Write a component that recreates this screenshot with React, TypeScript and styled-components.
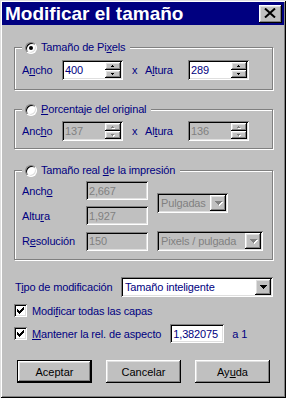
import React, { FC, ReactNode } from 'react';
import styled, { createGlobalStyle } from 'styled-components';

const GlobalStyle = createGlobalStyle`
	html, body {
		margin: 0;
		padding: 0;
	}
	body {
		background: #c0c0c0;
		font-family: "Liberation Sans", Arial, sans-serif;
		font-size: 11px;
		letter-spacing: -0.15px;
	}
	* {
		box-sizing: border-box;
	}
`

const NAVY = '#000080';

type Rect = [number, number, number, number];

const SPIN_UP: Rect[] = [[1, 0, 1, 1], [0, 1, 3, 1]];
const SPIN_DOWN: Rect[] = [[0, 0, 3, 1], [1, 1, 1, 1]];
const DROP: Rect[] = [[0, 0, 7, 1], [1, 1, 5, 1], [2, 2, 3, 1], [3, 3, 1, 1]];
// classic 7x7 check mark, one column at a time
const CHECK: Rect[] = [[0, 2, 1, 3], [1, 3, 1, 3], [2, 4, 1, 3], [3, 3, 1, 3], [4, 2, 1, 3], [5, 1, 1, 3], [6, 0, 1, 3]];

const Glyph: FC<{ rects: Rect[], w: number, h: number, off?: boolean }> = ({ rects, w, h, off }) => (
	<svg width={w + 1} height={h + 1} shapeRendering="crispEdges" style={{ display: 'block' }}>
		{off && rects.map(([x, y, rw, rh], i) => (
			<rect key={'s' + i} x={x + 1} y={y + 1} width={rw} height={rh} fill="#fff" />
		))}
		{rects.map(([x, y, rw, rh], i) => (
			<rect key={i} x={x} y={y} width={rw} height={rh} fill={off ? '#808080' : '#000'} />
		))}
	</svg>
)

const Field: FC<{ w: number, h: number, off?: boolean, spin?: boolean, children: ReactNode }> = ({ w, h, off, spin, children }) => (
	<FieldBox $w={w} $h={h} $off={off}>
		<FieldText>{children}</FieldText>
		{spin && (
			<Spinner>
				<SpinBtn><Glyph rects={SPIN_UP} w={3} h={2} off={off} /></SpinBtn>
				<SpinBtn><Glyph rects={SPIN_DOWN} w={3} h={2} off={off} /></SpinBtn>
			</Spinner>
		)}
	</FieldBox>
)

const Select: FC<{ w?: number, off?: boolean, children: ReactNode }> = ({ w, off, children }) => (
	<FieldBox $w={w} $h={20} $off={off}>
		<SelectText>{children}</SelectText>
		<DropBtn><Glyph rects={DROP} w={7} h={4} off={off} /></DropBtn>
	</FieldBox>
)

const App: FC = () => {
	return (
		<>
			<GlobalStyle />
			<Window>
				<TitleBar>
					<Title>Modificar el tamaño</Title>
					<CloseBtn aria-label="Cerrar">
						<svg width="12" height="10" viewBox="0 0 12 10">
							<path d="M1 0.5 L11 9.5 M11 0.5 L1 9.5" stroke="#000" strokeWidth="2" />
						</svg>
					</CloseBtn>
				</TitleBar>

				<Body>
					<Group $top={0} $pt={6} $pb={9}>
						<Legend>
							<Radio $on />
							<span>Tamaño de Pi<U>x</U>els</span>
						</Legend>
						<Row>
							<Label $w={40}>A<U>n</U>cho</Label>
							<Field w={61} h={20} spin>400</Field>
							<Times>x</Times>
							<Label $w={43}>A<U>l</U>tura</Label>
							<Field w={61} h={20} spin>289</Field>
						</Row>
					</Group>

					<Group $top={13} $pt={5} $pb={7}>
						<Legend>
							<Radio />
							<span><U>P</U>orcentaje del original</span>
						</Legend>
						<Row>
							<Label $w={40}>Anc<U>h</U>o</Label>
							<Field w={61} h={20} spin off>137</Field>
							<Times>x</Times>
							<Label $w={43}>Al<U>t</U>ura</Label>
							<Field w={61} h={20} spin off>136</Field>
						</Row>
					</Group>

					<Group $top={15} $pt={4} $pb={8}>
						<Legend>
							<Radio />
							<span>Tamaño real <U>d</U>e la impresión</span>
						</Legend>
						<PrintGrid>
							<Label>Anch<U>o</U></Label>
							<Field w={62} h={19} off>2,667</Field>
							<UnitCell $span={2}>
								<Select w={71} off>Pulgadas</Select>
							</UnitCell>
							<Label>Altu<U>r</U>a</Label>
							<Field w={62} h={19} off>1,927</Field>
							<Label>R<U>e</U>solución</Label>
							<Field w={62} h={19} off>150</Field>
							<UnitCell $span={1}>
								<Select w={106} off>Pixels / pulgada</Select>
							</UnitCell>
						</PrintGrid>
					</Group>

					<Row $top={17}>
						<Label $w={107} $pl={1}>T<U>i</U>po de modificación</Label>
						<Select>Tamaño inteligente</Select>
					</Row>

					<Row $top={7}>
						<Check />
						<CheckLabel>Modi<U>f</U>icar todas las capas</CheckLabel>
					</Row>

					<Row $top={7}>
						<Check />
						<CheckLabel><U>M</U>antener la rel. de aspecto</CheckLabel>
						<Ratio>
							<Field w={54} h={19}>1,382075</Field>
						</Ratio>
						<Suffix>a 1</Suffix>
					</Row>

					<Buttons>
						<Btn $default>Aceptar</Btn>
						<Btn>Cancelar</Btn>
						<Btn>Ay<U>u</U>da</Btn>
					</Buttons>
				</Body>
			</Window>
		</>
	)
}

export default App;


const sunken = `
	box-shadow: inset 1px 1px #808080, inset -1px -1px #fff, inset 2px 2px #000, inset -2px -2px #dfdfdf;
`

const raised = `
	box-shadow: inset -1px -1px #000, inset 1px 1px #fff, inset -2px -2px #808080, inset 2px 2px #dfdfdf;
`

const Window = styled.div`
	width: 286px;
	height: 398px;
	padding: 2px;
	display: flex;
	flex-direction: column;
	background: #c0c0c0;
	box-shadow: inset 1px 1px #dfdfdf, inset -1px -1px #000, inset 2px 2px #fff, inset -2px -2px #808080;
`

const TitleBar = styled.div`
	height: 23px;
	flex: none;
	display: flex;
	align-items: center;
	justify-content: space-between;
	padding: 0 2px 0 3px;
	background: ${NAVY};
	color: #fff;
`

const Title = styled.span`
	font-size: 19px;
	font-weight: bold;
	line-height: 23px;
	letter-spacing: 0;
`

const CloseBtn = styled.span`
	width: 23px;
	height: 18px;
	display: flex;
	align-items: center;
	justify-content: center;
	padding: 0 1px 1px 0;
	background: #c0c0c0;
	${raised}
`

const Body = styled.div`
	flex: 1;
	display: flex;
	flex-direction: column;
	padding: 16px 11px 0 12px;
`

const Group = styled.fieldset<{ $top: number, $pt: number, $pb: number }>`
	min-width: 0;
	margin: ${p => p.$top}px 0 0 0;
	padding: ${p => p.$pt}px 7px ${p => p.$pb}px 7px;
	border: 1px solid #808080;
	box-shadow: 1px 1px 0 #fff, inset 1px 1px 0 #fff;
`

const Legend = styled.legend`
	display: flex;
	align-items: center;
	gap: 4px;
	height: 13px;
	padding: 0 5px 0 3px;
	line-height: 13px;
	color: ${NAVY};
	background: #c0c0c0;
`

const Radio = styled.span<{ $on?: boolean }>`
	position: relative;
	width: 12px;
	height: 12px;
	flex: none;
	border-radius: 50%;
	background: #fff;
	border: 1px solid;
	border-color: #808080 #fff #fff #808080;
	box-shadow: inset 1px 1px #000, inset -1px -1px #dfdfdf;

	&::after {
		content: '';
		display: ${p => p.$on ? 'block' : 'none'};
		position: absolute;
		left: 3px;
		top: 3px;
		width: 4px;
		height: 4px;
		border-radius: 50%;
		background: #000;
	}
`

const U = styled.span`
	text-decoration: underline;
`

const Row = styled.div<{ $top?: number }>`
	display: flex;
	align-items: center;
	margin-top: ${p => p.$top || 0}px;
`

const Label = styled.span<{ $w?: number, $pl?: number }>`
	flex: none;
	width: ${p => p.$w ? `${p.$w}px` : 'auto'};
	padding-left: ${p => p.$pl || 0}px;
	color: ${NAVY};
	white-space: nowrap;
`

const Times = styled.span`
	width: 6px;
	margin: 0 7px 0 9px;
	color: ${NAVY};
`

const FieldBox = styled.div<{ $w?: number, $h: number, $off?: boolean }>`
	flex: ${p => p.$w ? 'none' : '1'};
	width: ${p => p.$w ? `${p.$w}px` : 'auto'};
	height: ${p => p.$h}px;
	display: flex;
	padding: 2px;
	background: ${p => p.$off ? '#c0c0c0' : '#fff'};
	color: ${p => p.$off ? '#808080' : NAVY};
	${sunken}
`

const FieldText = styled.span`
	flex: 1;
	display: flex;
	align-items: center;
	padding-left: 1px;
	white-space: nowrap;
	overflow: hidden;
`

const SelectText = styled(FieldText)`
	padding-left: 2px;
`

const Spinner = styled.div`
	width: 16px;
	flex: none;
	display: flex;
	flex-direction: column;
`

const SpinBtn = styled.span`
	flex: 1;
	display: flex;
	align-items: center;
	justify-content: center;
	background: #c0c0c0;
	${raised}
`

const DropBtn = styled.span`
	width: 16px;
	flex: none;
	display: flex;
	align-items: center;
	justify-content: center;
	padding: 1px 0 0 1px;
	background: #c0c0c0;
	${raised}
`

const PrintGrid = styled.div`
	display: grid;
	grid-template-columns: 64px 71px auto;
	grid-auto-rows: auto;
	row-gap: 6px;
	align-items: center;
`

const UnitCell = styled.div<{ $span: number }>`
	grid-row: span ${p => p.$span};
	align-self: center;
`

const Check: FC = () => (
	<CheckBox>
		<Glyph rects={CHECK} w={7} h={7} />
	</CheckBox>
)

const CheckBox = styled.span`
	width: 13px;
	height: 13px;
	flex: none;
	padding: 3px 0 0 3px;
	background: #fff;
	${sunken}
`

const CheckLabel = styled.span`
	margin-left: 5px;
	color: ${NAVY};
	white-space: nowrap;
`

const Ratio = styled.div`
	margin-left: 9px;
`

const Suffix = styled.span`
	margin-left: 8px;
	color: ${NAVY};
`

const Buttons = styled.div`
	display: flex;
	gap: 14px;
	margin-top: 17px;
	padding-left: 3px;
`

const Btn = styled.button<{ $default?: boolean }>`
	width: 75px;
	height: 23px;
	padding: 0;
	border: none;
	background: #c0c0c0;
	font: inherit;
	color: #000;
	${p => p.$default
		? 'box-shadow: inset 0 0 0 1px #000, inset -2px -2px #000, inset 2px 2px #fff, inset -3px -3px #808080, inset 3px 3px #dfdfdf;'
		: raised}
`
